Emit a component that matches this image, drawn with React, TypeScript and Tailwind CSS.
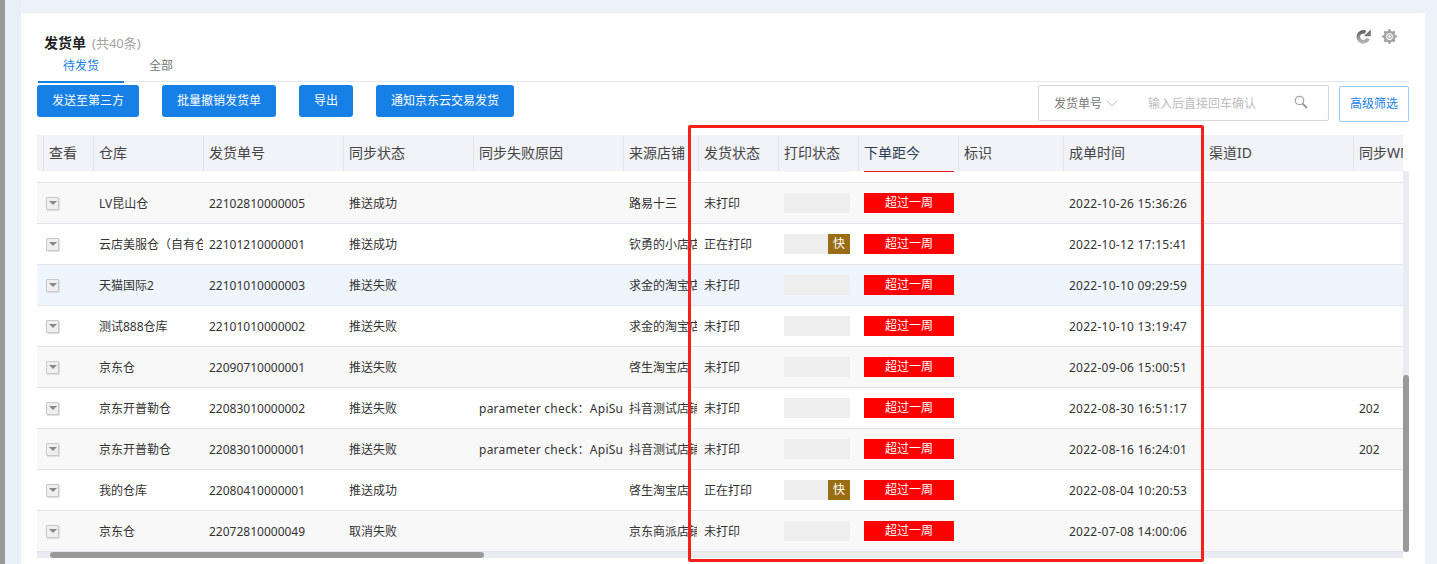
import React from 'react';

type Row = {
  wh: string;
  no: string;
  sync: string;
  reason?: string;
  shop: string;
  ship: string;
  fast?: boolean;
  time: string;
  wms?: string;
  bg: string;
};

const rows: Row[] = [
  { wh: 'LV昆山仓', no: '22102810000005', sync: '推送成功', shop: '路易十三', ship: '未打印', time: '2022-10-26 15:36:26', bg: 'bg-[#f8f8f8]' },
  { wh: '云店美服仓（自有仓）', no: '22101210000001', sync: '推送成功', shop: '钦勇的小店店', ship: '正在打印', fast: true, time: '2022-10-12 17:15:41', bg: 'bg-white' },
  { wh: '天猫国际2', no: '22101010000003', sync: '推送失败', shop: '求金的淘宝店', ship: '未打印', time: '2022-10-10 09:29:59', bg: 'bg-[#eef5fd]' },
  { wh: '测试888仓库', no: '22101010000002', sync: '推送失败', shop: '求金的淘宝店', ship: '未打印', time: '2022-10-10 13:19:47', bg: 'bg-white' },
  { wh: '京东仓', no: '22090710000001', sync: '推送失败', shop: '啓生淘宝店', ship: '未打印', time: '2022-09-06 15:00:51', bg: 'bg-[#f8f8f8]' },
  { wh: '京东开普勒仓', no: '22083010000002', sync: '推送失败', reason: 'parameter check：ApiSu', shop: '抖音测试店铺', ship: '未打印', time: '2022-08-30 16:51:17', wms: '202', bg: 'bg-white' },
  { wh: '京东开普勒仓', no: '22083010000001', sync: '推送失败', reason: 'parameter check：ApiSu', shop: '抖音测试店铺', ship: '未打印', time: '2022-08-16 16:24:01', wms: '202', bg: 'bg-[#f8f8f8]' },
  { wh: '我的仓库', no: '22080410000001', sync: '推送成功', shop: '啓生淘宝店', ship: '正在打印', fast: true, time: '2022-08-04 10:20:53', bg: 'bg-white' },
  { wh: '京东仓', no: '22072810000049', sync: '取消失败', shop: '京东商派店铺', ship: '未打印', time: '2022-07-08 14:00:06', bg: 'bg-[#f8f8f8]' },
];

const Head = ({ w, children }: { w: string; children?: React.ReactNode }) => (
  <div className={`${w} shrink-0 h-full flex items-center pl-[5px] pb-[2px] border-r border-[#e3e5eb] overflow-hidden whitespace-nowrap`}>
    {children}
  </div>
);

const Cell = ({ w, children }: { w: string; children?: React.ReactNode }) => (
  <div className={`${w} shrink-0 pl-[5px] pt-[2px] overflow-hidden whitespace-nowrap`}>{children}</div>
);

const Btn = ({ w, ml, children }: { w: string; ml: string; children: React.ReactNode }) => (
  <button className={`${w} ${ml} h-8 rounded-[3px] bg-[#1780e6] text-white text-[12px]`}>{children}</button>
);

export default function App() {
  return (
    <div className="relative h-[564px] w-[1437px] overflow-hidden bg-[#ebf3f8] text-[#333] text-[12px] font-['Noto_Sans','Noto_Sans_CJK_SC',sans-serif]">
      <div className="flex h-full">
        <div className="w-[5px] bg-[#999999] shrink-0" />
        <div className="w-4 shrink-0 bg-[#e8eff8]" />
        <div className="w-[1404px] shrink-0 mt-[13px] bg-white rounded-t-[2px] pl-4 pr-[16px]">
          {/* title + tabs */}
          <div className="flex justify-between pt-[20px] h-[69px] ml-px border-b border-[#e3e8f0]">
            <div className="pl-[6px]">
              <div className="leading-[20px]">
                <span className="text-[14px] font-bold text-[#222]">发货单</span>
                <span className="ml-[6px] text-[13px] text-[#a3a3a3]">(共40条)</span>
              </div>
              <div className="flex -ml-[6px] mt-[1px] text-[12px]">
                <div className="w-[86px] h-[28px] pt-[2px] text-center text-[#1780e6] border-b-2 border-[#1780e6] leading-[18px]">待发货</div>
                <div className="pl-[25px] pt-[2px] text-[#777] leading-[18px]">全部</div>
              </div>
            </div>
            <div className="flex gap-[11px] items-start pr-[12px] -mt-[4px]">
              <svg width="15" height="15" viewBox="0 0 15 15">
                <defs>
                  <linearGradient id="refreshFill" x1="0" y1="0" x2="0" y2="1">
                    <stop offset="0" stopColor="#666" />
                    <stop offset="1" stopColor="#b5b5b5" />
                  </linearGradient>
                </defs>
                <path d="M12 9.6A5 5 0 1 1 9.4 3.3" fill="none" stroke="url(#refreshFill)" strokeWidth="3.6" />
                <path d="M7.8 7.2 14.8 7.2 14.8 0.4Z" fill="#777" />
              </svg>
              <svg width="15" height="15" viewBox="0 0 24 24">
                <circle cx="12" cy="12" r="7.4" fill="none" stroke="#a8a8a8" strokeWidth="4" />
                <circle cx="12" cy="12" r="3" fill="none" stroke="#888" strokeWidth="1.4" />
                <path d="M12 0.5V5M12 19V23.5M0.5 12H5M19 12H23.5M3.9 3.9 7 7M17 17 20.1 20.1M3.9 20.1 7 17M17 7 20.1 3.9" stroke="#a0a0a0" strokeWidth="4" />
              </svg>
            </div>
          </div>

          {/* toolbar */}
          <div className="flex items-start h-[53px] pt-[3px]">
            <Btn w="w-[102px]" ml="ml-0">发送至第三方</Btn>
            <Btn w="w-[114px]" ml="ml-[23px]">批量撤销发货单</Btn>
            <Btn w="w-[54px]" ml="ml-[23px]">导出</Btn>
            <Btn w="w-[138px]" ml="ml-[23px]">通知京东云交易发货</Btn>
            <div className="ml-[524px] w-[291px] h-[36px] border border-[#d6d6d6] rounded-[2px] flex items-center">
              <span className="ml-[15px] pt-[2px] text-[#777]">发货单号</span>
              <svg width="12" height="7" viewBox="0 0 12 7" className="ml-[4px]">
                <path d="M1 1 6 6 11 1" fill="none" stroke="#c4c4c4" strokeWidth="1" />
              </svg>
              <span className="ml-[30px] pt-[2px] text-[#bdbdbd]">输入后直接回车确认</span>
              <svg width="14" height="14" viewBox="0 0 14 14" className="ml-[38px] -mt-[2px]">
                <circle cx="5.5" cy="5.5" r="4.2" fill="none" stroke="#aaa" strokeWidth="1.3" />
                <path d="M8.6 8.6 13 13" stroke="#999" strokeWidth="2" />
              </svg>
            </div>
            <button className="ml-[10px] w-[70px] h-[36px] mt-px border border-[#9ccaf5] rounded-[2px] text-[#1780e6]">高级筛选</button>
          </div>

          {/* table + vertical scrollbar */}
          <div className="flex">
            <div className="w-[1366px] shrink-0">
              <div className="flex h-[36px] bg-[#f1f3f8] text-[14px] text-[#444]">
                <Head w="w-[7px]" />
                <Head w="w-[50px]">查看</Head>
                <Head w="w-[110px]">仓库</Head>
                <Head w="w-[140px]">发货单号</Head>
                <Head w="w-[130px]">同步状态</Head>
                <Head w="w-[150px]">同步失败原因</Head>
                <Head w="w-[75px]">来源店铺</Head>
                <Head w="w-[80px]">发货状态</Head>
                <Head w="w-[80px]">打印状态</Head>
                <Head w="w-[100px]">
                  <span className="text-[#2c3e50]">下单距今</span>
                </Head>
                <Head w="w-[105px]">标识</Head>
                <Head w="w-[140px]">成单时间</Head>
                <Head w="w-[150px]">渠道ID</Head>
                <div className="w-[49px] shrink-0 h-full flex items-center pl-[5px] pb-[2px] overflow-hidden whitespace-nowrap">同步WMS</div>
              </div>
              <div className="flex h-[12px] border-b border-[#e3e5eb] pl-[747px]">
                <div className="w-[66px] h-[1px] bg-[#f1f3f8]" />
                <div className="ml-[14px] w-[90px] h-[1px] bg-[#e3161c]" />
              </div>
              {rows.map((r) => (
                <div key={r.no} className={`flex h-[41px] items-center border-b border-[#e3e5eb] ${r.bg}`}>
                  <div className="w-[7px] shrink-0" />
                  <div className="w-[50px] shrink-0 pl-[2px]">
                    <div className="w-[13px] h-[13px] rounded-[1px] border border-[#c8c8c8] bg-[#efefef] shadow-[1px_1px_1px_#ddd] flex items-center justify-center">
                      <div className="w-0 h-0 border-x-[4px] border-x-transparent border-t-[4px] border-t-[#888]" />
                    </div>
                  </div>
                  <Cell w="w-[109px] mr-px">{r.wh}</Cell>
                  <Cell w="w-[140px]">{r.no}</Cell>
                  <Cell w="w-[130px]">{r.sync}</Cell>
                  <Cell w="w-[150px]">
                    <span className="tracking-[0.25px]">{r.reason}</span>
                  </Cell>
                  <Cell w="w-[73px] mr-[2px]">{r.shop}</Cell>
                  <Cell w="w-[80px]">{r.ship}</Cell>
                  <div className="w-[80px] shrink-0 pl-[5px]">
                    <div className="w-[66px] h-5 bg-[#eeeeee] flex justify-end">
                      {r.fast && <div className="w-[22px] h-5 bg-[#9a6d14] text-white text-center leading-[20px]">快</div>}
                    </div>
                  </div>
                  <div className="w-[100px] shrink-0 pl-[5px]">
                    <div className="w-[90px] h-5 bg-[#ff0000] text-white text-center leading-[20px]">超过一周</div>
                  </div>
                  <div className="w-[105px] shrink-0" />
                  <Cell w="w-[140px]">
                    <span className="tracking-[0.25px]">{r.time}</span>
                  </Cell>
                  <div className="w-[150px] shrink-0" />
                  <Cell w="w-[49px]">{r.wms}</Cell>
                </div>
              ))}
              <div className="h-[6px] bg-[#e9ecf1] pl-[13px]">
                <div className="w-[434px] h-full rounded-[3px] bg-[#999999]" />
              </div>
            </div>
            <div className="w-[6px] shrink-0 mt-[36px] h-[381px] bg-[#e9ecf1] pt-[204px]">
              <div className="h-[177px] rounded-[3px] bg-[#999999]" />
            </div>
          </div>
        </div>
      </div>
      {/* red annotation drawn over the screenshot */}
      <div className="absolute left-[688px] top-[125px] w-[516px] h-[437px] border-[3px] border-[#f5201a] rounded-[2px] pointer-events-none" />
    </div>
  );
}
